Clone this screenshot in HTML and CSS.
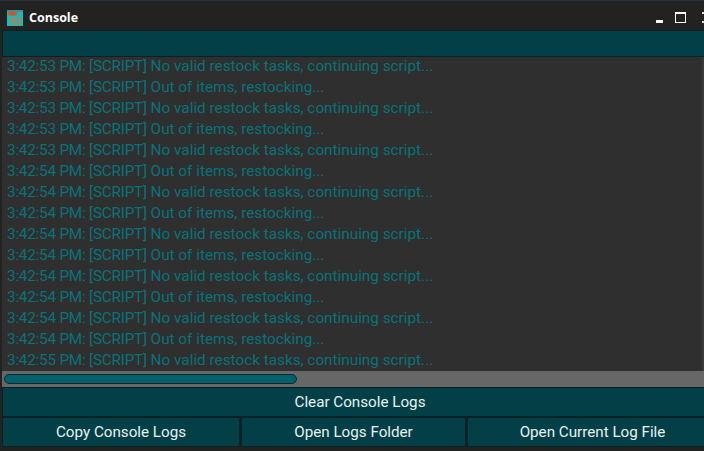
FILE: index.html
```html
<!DOCTYPE html>
<html lang="en">
<head>
<meta charset="utf-8">
<title>Console</title>
<link rel="stylesheet" href="styles.css">
</head>
<body>
<div class="window">
  <div class="desk-strip"></div>
  <header class="titlebar">
    <svg class="app-icon" width="16" height="16" viewBox="0 0 16 16">
      <rect width="16" height="16" fill="#27b4b4"/>
      <rect x="0" y="0" width="16" height="2" fill="#3d8fa0"/>
      <ellipse cx="5.5" cy="3.5" rx="4.5" ry="2.2" fill="#c9592a"/>
      <circle cx="6" cy="10" r="2" fill="#e0703f"/>
      <circle cx="12" cy="9.5" r="1.8" fill="#e0703f"/>
      <rect x="6" y="13" width="7" height="1.6" fill="#e0703f"/>
    </svg>
    <span class="title">Console</span>
    <div class="controls">
      <span class="ctl-min"></span>
      <span class="ctl-max"></span>
      <svg class="ctl-close" width="2" height="11" viewBox="0 0 2 11">
        <rect y="0" width="2" height="2" fill="#ddd"/>
        <rect y="9" width="2" height="2" fill="#ddd"/>
      </svg>
    </div>
  </header>
  <div class="input-bar"></div>
  <div class="log">
    <div class="line"><span class="stamp">3:42:53 PM: [SCRIPT]</span> No valid restock tasks, continuing script...</div>
    <div class="line"><span class="stamp">3:42:53 PM: [SCRIPT]</span> Out of items, restocking...</div>
    <div class="line"><span class="stamp">3:42:53 PM: [SCRIPT]</span> No valid restock tasks, continuing script...</div>
    <div class="line"><span class="stamp">3:42:53 PM: [SCRIPT]</span> Out of items, restocking...</div>
    <div class="line"><span class="stamp">3:42:53 PM: [SCRIPT]</span> No valid restock tasks, continuing script...</div>
    <div class="line"><span class="stamp">3:42:54 PM: [SCRIPT]</span> Out of items, restocking...</div>
    <div class="line"><span class="stamp">3:42:54 PM: [SCRIPT]</span> No valid restock tasks, continuing script...</div>
    <div class="line"><span class="stamp">3:42:54 PM: [SCRIPT]</span> Out of items, restocking...</div>
    <div class="line"><span class="stamp">3:42:54 PM: [SCRIPT]</span> No valid restock tasks, continuing script...</div>
    <div class="line"><span class="stamp">3:42:54 PM: [SCRIPT]</span> Out of items, restocking...</div>
    <div class="line"><span class="stamp">3:42:54 PM: [SCRIPT]</span> No valid restock tasks, continuing script...</div>
    <div class="line"><span class="stamp">3:42:54 PM: [SCRIPT]</span> Out of items, restocking...</div>
    <div class="line"><span class="stamp">3:42:54 PM: [SCRIPT]</span> No valid restock tasks, continuing script...</div>
    <div class="line"><span class="stamp">3:42:54 PM: [SCRIPT]</span> Out of items, restocking...</div>
    <div class="line"><span class="stamp">3:42:55 PM: [SCRIPT]</span> No valid restock tasks, continuing script...</div>
  </div>
  <div class="hscroll"><div class="thumb"></div></div>
  <button class="btn btn-wide">Clear Console Logs</button>
  <div class="btn-row">
    <button class="btn btn-a">Copy Console Logs</button>
    <button class="btn btn-b">Open Logs Folder</button>
    <button class="btn btn-c">Open Current Log File</button>
  </div>
</div>
</body>
</html>
```
FILE: styles.css
```css
* { box-sizing: border-box; }
html, body { margin: 0; padding: 0; }
body { width: 704px; height: 451px; overflow: hidden; background: #222; font-family: Roboto, sans-serif; }
.window { width: 704px; height: 451px; display: flex; flex-direction: column; background: #222; overflow: hidden; }
.desk-strip { height: 1px; background: #2c3142; flex: none; }
.titlebar { height: 29px; flex: none; display: flex; align-items: center; padding: 4px 0 0 7px; background: #222; }
.app-icon { flex: none; }
.title { margin-left: 6px; font-family: "Open Sans", sans-serif; font-weight: 700; font-size: 12.5px; color: #fff; }
.controls { margin-left: auto; display: flex; align-items: center; }
.ctl-min { width: 7px; height: 3px; background: #fff; margin-top: 8px; margin-right: 12px; }
.ctl-max { width: 11px; height: 11px; border: 1px solid #fff; border-top-width: 2px; margin-right: 16px; }
.ctl-close { flex: none; display: block; }
.input-bar { height: 27px; flex: none; margin-left: 2px; background: #033f47; border: 1px solid #0a2226; border-width: 1px 0 1px 1px; }
.log { height: 314px; flex: none; margin-left: 2px; background: #2f2f2f; overflow: hidden; padding-left: 5px; border-right: 2px solid #3a3a3a; }
.line { height: 21px; line-height: 18px; font-size: 15.3px; color: #08727a; white-space: nowrap; }
.stamp { letter-spacing: -0.22px; }
.hscroll { height: 16px; flex: none; margin-left: 2px; background: #676767; padding: 3px 0 3px 2px; }
.thumb { width: 293px; height: 10px; background: #02606a; border: 1px solid #0a2a30; border-radius: 5px; }
.btn { display: block; margin: 0; padding: 0; font-family: Roboto, sans-serif; font-size: 15.2px; color: #e8f2f2; background: #033f47; border: 1px solid #0a2226; text-align: center; }
.btn-wide { width: 716px; height: 30px; margin-left: 2px; flex: none; }
.btn-row { display: flex; width: 716px; height: 30px; margin-left: 2px; flex: none; }
.btn-a { width: 238px; flex: none; }
.btn-b { width: 226px; flex: none; border-left: 2px solid #0a2226; }
.btn-c { flex: 1; border-left: 2px solid #0a2226; }
```
